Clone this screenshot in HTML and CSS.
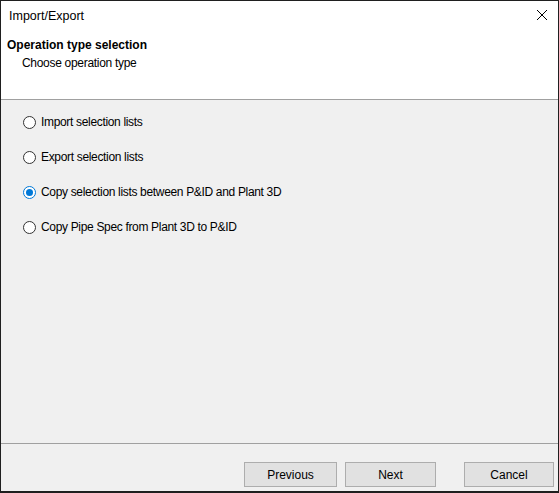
FILE: index.html
```html
<!DOCTYPE html>
<html>
<head>
<meta charset="utf-8">
<link rel="stylesheet" href="styles.css">
</head>
<body>
<div class="window">
  <div class="top">
    <div class="titlebar">
      <span class="title">Import/Export</span>
      <svg class="close" width="12" height="12" viewBox="0 0 12 12"><path d="M1 1 L11 11 M11 1 L1 11" stroke="#000" stroke-width="1" fill="none"/></svg>
    </div>
    <div class="header">
      <div class="h-title">Operation type selection</div>
      <div class="h-sub">Choose operation type</div>
    </div>
  </div>
  <div class="content">
    <label class="option"><span class="radio"></span><span>Import selection lists</span></label>
    <label class="option"><span class="radio"></span><span>Export selection lists</span></label>
    <label class="option"><span class="radio checked"></span><span>Copy selection lists between P&amp;ID and Plant 3D</span></label>
    <label class="option"><span class="radio"></span><span>Copy Pipe Spec from Plant 3D to P&amp;ID</span></label>
  </div>
  <div class="footer">
    <button class="btn btn-prev">Previous</button>
    <button class="btn btn-next">Next</button>
    <button class="btn btn-cancel">Cancel</button>
  </div>
</div>
</body>
</html>
```

FILE: styles.css
```css
html, body {
  margin: 0;
  padding: 0;
  background: #f0f0f0;
}
.window {
  width: 559px;
  height: 493px;
  box-sizing: border-box;
  border: 1px solid #1f1f1f;
  border-bottom-width: 2px;
  display: flex;
  flex-direction: column;
  font-family: "Liberation Sans", Arial, sans-serif;
  font-size: 12px;
  color: #000;
  background: #f0f0f0;
}
.top {
  background: #fff;
  height: 98px;
  border-bottom: 1px solid #a0a0a0;
  display: flex;
  flex-direction: column;
}
.titlebar {
  height: 30px;
  display: flex;
  align-items: center;
  justify-content: space-between;
  padding: 0 9px 0 8px;
}
.title {
  font-size: 12.5px;
}
.close {
  display: block;
  margin-right: 1px;
  margin-top: -2px;
}
.header {
  padding: 6px 0 0 6px;
}
.h-title {
  font-weight: bold;
  line-height: 16px;
}
.h-sub {
  padding-left: 15px;
  line-height: 20px;
  letter-spacing: -0.3px;
}
.content {
  flex: 1;
  display: flex;
  flex-direction: column;
  gap: 19px;
  padding: 14px 0 0 22px;
  border-bottom: 1px solid #a0a0a0;
}
.option {
  display: flex;
  align-items: center;
  gap: 5px;
  height: 16px;
  letter-spacing: -0.33px;
}
.radio {
  width: 13px;
  height: 13px;
  box-sizing: border-box;
  border: 1px solid #333;
  border-radius: 50%;
  background: #fff;
  display: flex;
  align-items: center;
  justify-content: center;
}
.radio.checked {
  border-color: #0078d7;
}
.radio.checked::after {
  content: "";
  width: 7px;
  height: 7px;
  border-radius: 50%;
  background: #0078d7;
}
.footer {
  height: 47px;
  display: flex;
  align-items: flex-start;
  padding: 18px 0 0 243px;
  box-sizing: border-box;
}
.btn {
  height: 25px;
  box-sizing: border-box;
  border: 1px solid #adadad;
  background: #e1e1e1;
  font-family: inherit;
  font-size: 12px;
  color: #000;
  padding: 0;
}
.btn-prev { width: 93px; }
.btn-next { width: 91px; margin-left: 8px; }
.btn-cancel { width: 90px; margin-left: 28px; }
```
